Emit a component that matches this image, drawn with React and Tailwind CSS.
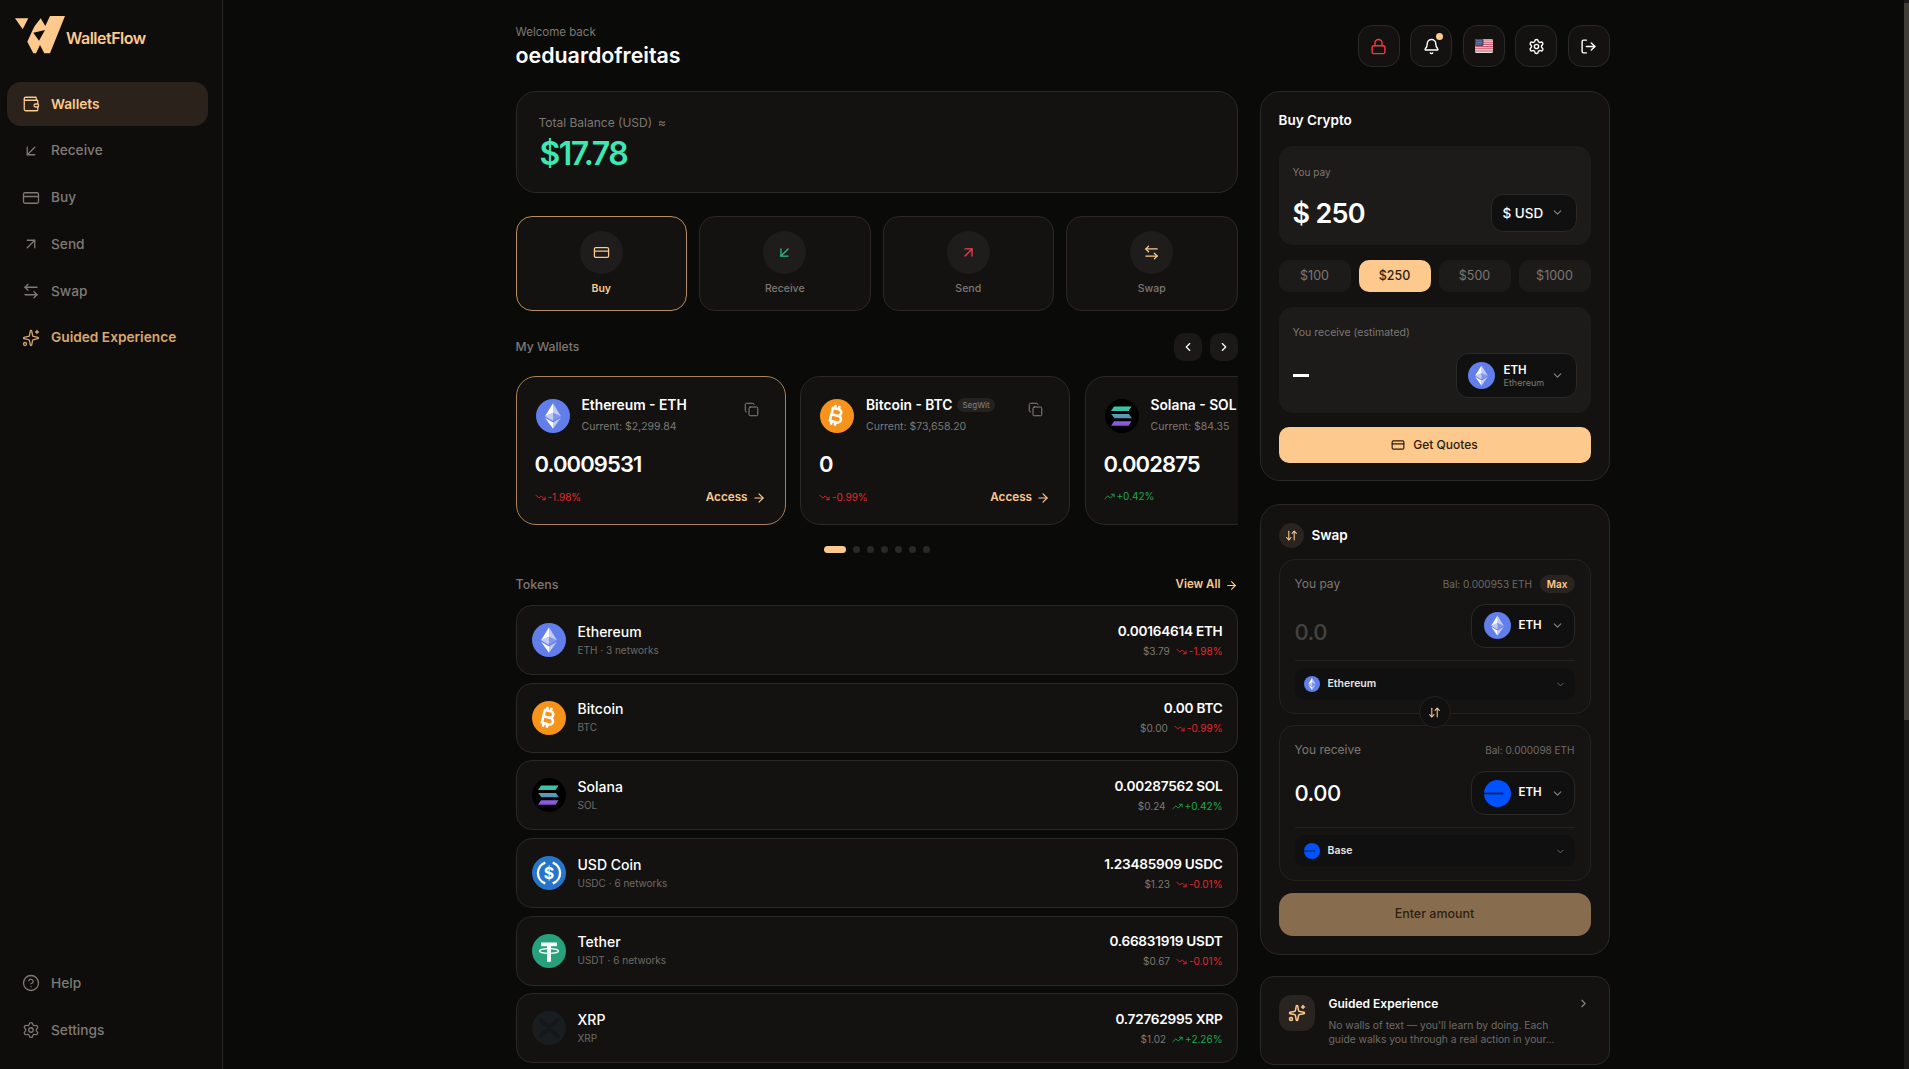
import {
  Wallet, ArrowDownLeft, CreditCard, ArrowUpRight, ArrowLeftRight, Sparkles, CircleHelp, Settings,
  Lock, Bell, LogOut, ChevronDown, ChevronLeft, ChevronRight, Copy, ArrowRight, TrendingDown, TrendingUp, ArrowDownUp,
} from 'lucide-react';
import { FaBitcoinSign } from 'react-icons/fa6';

// coin logos
function EthIcon({ size = 34 }) {
  return (
    <svg width={size} height={size} viewBox="0 0 32 32" className="shrink-0">
      <circle cx="16" cy="16" r="16" fill="#627EEA" />
      <path d="M16 4v8.900l7.500 3.300z" fill="#fff" fillOpacity=".6" />
      <path d="M16 4L8.500 16.200l7.500-3.300z" fill="#fff" />
      <path d="M16 22v6l7.500-10.400z" fill="#fff" fillOpacity=".6" />
      <path d="M16 28v-6l-7.500-4.400z" fill="#fff" />
      <path d="M16 20.600l7.500-4.400-7.500-3.300z" fill="#fff" fillOpacity=".2" />
      <path d="M8.500 16.200l7.500 4.400v-7.700z" fill="#fff" fillOpacity=".6" />
    </svg>
  );
}

function BtcIcon({ size = 34 }) {
  return (
    <div className="flex items-center justify-center rounded-full bg-[#f7931a] text-white shrink-0" style={{ width: size, height: size }}>
      <FaBitcoinSign className="rotate-[14deg]" size={size * 0.62} />
    </div>
  );
}

function SolIcon({ size = 34 }) {
  return (
    <svg width={size} height={size} viewBox="0 0 32 32" className="shrink-0">
      <defs>
        <linearGradient id="solgrad" x1="0" y1="0" x2="0" y2="1">
          <stop offset="0" stopColor="#2fd0a0" />
          <stop offset=".5" stopColor="#5a9bb5" />
          <stop offset="1" stopColor="#9a45e8" />
        </linearGradient>
      </defs>
      <circle cx="16" cy="16" r="16" fill="#000" />
      <path d="M8.500 7h16.500l-2.800 4.200H5.700z M6 14h16.500l2.800 4.200H8.800z M8.500 21h16.500l-2.800 4.200H5.700z" fill="url(#solgrad)" />
    </svg>
  );
}

function UsdcIcon({ size = 34 }) {
  return (
    <svg width={size} height={size} viewBox="0 0 32 32" className="shrink-0">
      <circle cx="16" cy="16" r="16" fill="#2775CA" />
      <path d="M12.500 6.200a10.400 10.400 0 0 0 0 19.600 M19.500 6.200a10.400 10.400 0 0 1 0 19.600" fill="none" stroke="#fff" strokeWidth="2.200" />
      <text x="16" y="21.500" textAnchor="middle" fontSize="15" fontWeight="700" fill="#fff" fontFamily="Inter, sans-serif">$</text>
    </svg>
  );
}

function UsdtIcon({ size = 34 }) {
  return (
    <svg width={size} height={size} viewBox="0 0 32 32" className="shrink-0">
      <circle cx="16" cy="16" r="16" fill="#26A17B" />
      <path d="M8.500 8h15v3.600h-5.600V26h-3.800V11.600H8.500z" fill="#fff" />
      <ellipse cx="16" cy="16" rx="9" ry="2.200" fill="none" stroke="#fff" strokeWidth="1.200" />
    </svg>
  );
}

function XrpIcon({ size = 34 }) {
  return (
    <svg width={size} height={size} viewBox="0 0 32 32" className="shrink-0">
      <circle cx="16" cy="16" r="16" fill="#1a1d20" />
      <path d="M7 7c3 4 5.500 7 9 7s6-3 9-7 M7 25c3-4 5.500-7 9-7s6 3 9 7" fill="none" stroke="#15181a" strokeWidth="3.500" />
    </svg>
  );
}

function BaseIcon({ size = 27 }) {
  return (
    <svg width={size} height={size} viewBox="0 0 32 32" className="shrink-0">
      <circle cx="16" cy="16" r="16" fill="#0052FF" />
      <rect x="0" y="15" width="23" height="2" fill="#0a1a44" />
    </svg>
  );
}

function UsFlag() {
  return (
    <svg width="18" height="14" viewBox="0 0 18 14">
      <rect width="18" height="14" rx="1.500" fill="#e9dfe0" />
      <path d="M0 1h18M0 3.200h18M0 5.400h18M0 7.600h18M0 9.800h18M0 12h18" stroke="#c9566b" strokeWidth="1.100" />
      <rect width="8.500" height="7" rx="1" fill="#3c4a7d" />
      <path d="M1.500 1.800h5.500M1.500 3.500h5.500M1.500 5.200h5.500" stroke="#c5cbe0" strokeWidth=".7" strokeDasharray="1 1" />
    </svg>
  );
}

function Logo() {
  return (
    <svg width="52" height="42" viewBox="14 15 52 42" className="shrink-0">
      <path d="M15 18.300h13.300l-5.600 11z" fill="#fdc98c" />
      <path
        fillRule="evenodd"
        fill="#fdc98c"
        d="M50 16h15L50 53.300h-5.700L40 45l-4 8.300h-2.700l-6-11.600 5-11 2.400-4.700 6-7.700 4.600 7.700z M33.300 32.700L45 30l-6 10.700z"
      />
    </svg>
  );
}

const navItems = [
  { label: 'Wallets', icon: Wallet, active: true },
  { label: 'Receive', icon: ArrowDownLeft },
  { label: 'Buy', icon: CreditCard },
  { label: 'Send', icon: ArrowUpRight },
  { label: 'Swap', icon: ArrowLeftRight },
];

const actions = [
  { label: 'Buy', icon: CreditCard, color: 'text-[#fdc98c]', active: true },
  { label: 'Receive', icon: ArrowDownLeft, color: 'text-[#2fbf84]' },
  { label: 'Send', icon: ArrowUpRight, color: 'text-[#ef4050]' },
  { label: 'Swap', icon: ArrowLeftRight, color: 'text-[#fdc98c]' },
];

const wallets = [
  { title: 'Ethereum - ETH', current: '$2,299.84', amount: '0.0009531', change: '-1.98%', up: false, logo: EthIcon, active: true },
  { title: 'Bitcoin - BTC', tag: 'SegWit', current: '$73,658.20', amount: '0', change: '-0.99%', up: false, logo: BtcIcon },
  { title: 'Solana - SOL', current: '$84.35', amount: '0.002875', change: '+0.42%', up: true, logo: SolIcon },
];

const tokens = [
  { name: 'Ethereum', sub: 'ETH · 3 networks', amount: '0.00164614 ETH', usd: '$3.79', change: '-1.98%', up: false, logo: EthIcon },
  { name: 'Bitcoin', sub: 'BTC', amount: '0.00 BTC', usd: '$0.00', change: '-0.99%', up: false, logo: BtcIcon },
  { name: 'Solana', sub: 'SOL', amount: '0.00287562 SOL', usd: '$0.24', change: '+0.42%', up: true, logo: SolIcon },
  { name: 'USD Coin', sub: 'USDC · 6 networks', amount: '1.23485909 USDC', usd: '$1.23', change: '-0.01%', up: false, logo: UsdcIcon },
  { name: 'Tether', sub: 'USDT · 6 networks', amount: '0.66831919 USDT', usd: '$0.67', change: '-0.01%', up: false, logo: UsdtIcon },
  { name: 'XRP', sub: 'XRP', amount: '0.72762995 XRP', usd: '$1.02', change: '+2.26%', up: true, logo: XrpIcon },
];

function Change({ value, up }) {
  const Icon = up ? TrendingUp : TrendingDown;
  return (
    <span className={`flex items-center gap-[2px] text-[10px] ${up ? 'text-[#1fa64f]' : 'text-[#e5262c]'}`}>
      <Icon size={11} />
      {value}
    </span>
  );
}

function HeaderButton({ children }) {
  return (
    <button className="relative w-[42px] h-[42px] rounded-[14px] border border-[#2a2928] bg-[#131211] flex items-center justify-center text-white">
      {children}
    </button>
  );
}

function WalletCard({ w }) {
  const Coin = w.logo;
  return (
    <div className={`w-[270px] h-[149px] shrink-0 rounded-[20px] border bg-[#131211] pt-[19px] pl-[18px] pr-[19px] ${w.active ? 'border-[#a98255]' : 'border-[#2a2928]'}`}>
      <div className="flex items-start">
        <div className="mt-[3px] ml-[1px]"><Coin size={34} /></div>
        <div className="ml-[12px] flex-1 whitespace-nowrap">
          <div className="flex items-center gap-[5px] h-[18px]">
            <span className="text-[13.800px] font-semibold text-white">{w.title}</span>
            {w.tag && <span className="rounded-full bg-[#232221] px-[5px] py-[1px] text-[8px] text-[#8a8580]">{w.tag}</span>}
          </div>
          <div className="mt-[5px] text-[10.500px] text-[#7d7872]">Current: {w.current}</div>
        </div>
        {!w.up && <Copy size={15} strokeWidth={1.6} className="mt-[6px] mr-[7px] text-[#8a8580]" />}
      </div>
      <div className="mt-[15px] text-[22px] leading-[28px] font-semibold tracking-[-0.9px] text-white">{w.amount}</div>
      <div className="mt-[11px] flex items-center justify-between">
        <Change value={w.change} up={w.up} />
        {!w.up && (
          <span className="flex items-center gap-[4px] text-[11.700px] font-semibold text-[#fdc98c]">
            Access <ArrowRight size={14} />
          </span>
        )}
      </div>
    </div>
  );
}

function TokenRow({ t }) {
  const Coin = t.logo;
  return (
    <div className="h-[70px] rounded-[16px] border border-[#2a2928] bg-[#131211] flex items-center justify-between pl-[15px] pr-[14px]">
      <div className="flex items-center gap-[12px]">
        <Coin size={34} />
        <div>
          <div className="text-[14px] leading-[18px] font-medium text-white">{t.name}</div>
          <div className="mt-[2px] text-[10px] leading-[15px] text-[#6f6b66]">{t.sub}</div>
        </div>
      </div>
      <div className="flex flex-col items-end">
        <div className="text-[13.600px] leading-[18px] font-semibold tracking-[-0.25px] text-white">{t.amount}</div>
        <div className="mt-[4px] flex items-center gap-[6px] text-[10px] text-[#7d7872]">
          {t.usd}
          <Change value={t.change} up={t.up} />
        </div>
      </div>
    </div>
  );
}

function SwapPanel({ label, bal, max, value, muted, coin, network, receive }) {
  return (
    <div className={`rounded-[16px] border border-[#232221] bg-[#151413] px-[15px] pt-[15px] ${receive ? 'h-[156px]' : 'h-[155px]'}`}>
      <div className="h-[18px] flex items-center justify-between">
        <span className="text-[12px] text-[#7d7872]">{label}</span>
        <div className="flex items-center gap-[8px]">
          <span className="text-[10px] text-[#6f6b66]">{bal}</span>
          {max && <span className="rounded-full bg-[#2a2420] px-[7px] h-[18px] leading-[18px] text-[10px] font-semibold text-[#fdc98c]">Max</span>}
        </div>
      </div>
      <div className={`flex items-center justify-between ${receive ? 'mt-[12px]' : 'mt-[9px]'}`}>
        <span className={`text-[22px] font-medium tracking-[-0.5px] ${muted ? 'pt-[14px] text-[#454340]' : 'text-white'}`}>{value}</span>
        <div className="w-[104px] h-[44px] rounded-[14px] border border-[#2a2928] bg-[#111010] flex items-center pl-[12px]">
          {coin}
          <span className="ml-[8px] text-[11.500px] font-semibold text-white">ETH</span>
          <ChevronDown size={13} className="ml-[9px] text-[#8a8580]" />
        </div>
      </div>
      <div className={`border-t border-[#232221] ${receive ? 'mt-[12px]' : 'mt-[11px]'}`} />
      <div className="mt-[7px] h-[32px] rounded-[10px] bg-[#111010] flex items-center justify-between pl-[9px] pr-[9px]">
        <div className="flex items-center gap-[8px]">
          {network.icon}
          <span className="text-[10.500px] font-semibold text-[#e6e4e1]">{network.name}</span>
        </div>
        <ChevronDown size={11} className="text-[#6f6b66]" />
      </div>
    </div>
  );
}

export default function App() {
  return (
    <div className="h-screen w-full flex overflow-hidden bg-[#0a0a09] text-white font-[family-name:Inter,sans-serif]">
      {/* sidebar */}
      <aside className="w-[223px] shrink-0 h-full bg-[#0e0d0c] border-r border-[#2a2928] flex flex-col justify-between">
        <div>
          <div className="h-[82px] pl-[14px] pt-[15px] flex items-start">
            <Logo />
            <span className="mt-[11px] text-[16px] font-semibold tracking-[-0.5px] text-[#fdc98c]">WalletFlow</span>
          </div>
          <nav className="px-[7px] w-[215px] flex flex-col gap-[2.750px]">
            {navItems.map(item => {
              const Icon = item.icon;
              return (
                <div key={item.label} className={`h-[44px] rounded-[14px] pl-[15px] flex items-center gap-[11px] text-[13.700px] ${item.active ? 'bg-[#2a221b] text-[#fdc98c] font-semibold' : 'text-[#7f7a74] font-medium'}`}>
                  <Icon size={18} strokeWidth={1.7} />
                  {item.label}
                </div>
              );
            })}
            <div className="h-[44px] pl-[15px] flex items-center gap-[11px] text-[13.700px] font-semibold text-[#d9a86c]">
              <Sparkles size={18} strokeWidth={1.7} />
              Guided Experience
            </div>
          </nav>
        </div>
        <div className="px-[7px] pb-[17px] flex flex-col gap-[3px]">
          <div className="h-[44px] pl-[15px] flex items-center gap-[11px] text-[13.700px] font-medium text-[#7f7a74]">
            <CircleHelp size={18} strokeWidth={1.7} /> Help
          </div>
          <div className="h-[44px] pl-[15px] flex items-center gap-[11px] text-[13.700px] font-medium text-[#7f7a74]">
            <Settings size={18} strokeWidth={1.7} /> Settings
          </div>
        </div>
      </aside>

      {/* main */}
      <main className="flex-1 h-full overflow-hidden pr-[2px]">
        <div className="w-[1094px] mx-auto pt-[25px]">
          <header className="h-[42px] flex items-center justify-between">
            <div>
              <div className="text-[11.500px] leading-[14px] text-[#7d7872]">Welcome back</div>
              <div className="mt-[3px] text-[21.400px] leading-[26px] font-semibold text-white">oeduardofreitas</div>
            </div>
            <div className="flex gap-[10.500px]">
              <HeaderButton><Lock size={17} className="text-[#ef3a3f]" /></HeaderButton>
              <HeaderButton>
                <Bell size={17} />
                <span className="absolute right-[8px] top-[7px] w-[7px] h-[7px] rounded-full bg-[#fdc98c]" />
              </HeaderButton>
              <HeaderButton><UsFlag /></HeaderButton>
              <HeaderButton><Settings size={17} /></HeaderButton>
              <HeaderButton><LogOut size={17} /></HeaderButton>
            </div>
          </header>

          <div className="mt-[24px] grid grid-cols-[722px_350px] gap-[22px] items-start">
            {/* left column */}
            <div>
              <div className="h-[102px] rounded-[20px] border border-[#2a2928] bg-[#131211] pl-[22px] pt-[22px]">
                <div className="flex items-center gap-[6px] text-[12px] leading-[18px] text-[#7d7872]">
                  Total Balance (USD) <span className="text-[12px]">≈</span>
                </div>
                <div className="mt-[2px] pl-[1px] text-[32px] leading-[40px] font-semibold tracking-[-1.500px] text-[#3ee8b5]">$17.78</div>
              </div>

              <div className="mt-[23px] grid grid-cols-4 gap-[12px]">
                {actions.map(a => {
                  const Icon = a.icon;
                  return (
                    <div key={a.label} className={`h-[95px] rounded-[16px] border bg-[#131211] flex flex-col items-center pt-[14px] ${a.active ? 'border-[#b88d5c]' : 'border-[#2a2928]'}`}>
                      <div className={`w-[43px] h-[43px] rounded-full bg-[#1e1d1c] flex items-center justify-center ${a.color}`}>
                        <Icon size={17} strokeWidth={1.8} />
                      </div>
                      <span className={`mt-[7px] text-[10.500px] ${a.active ? 'font-semibold text-[#fdc98c]' : 'font-medium text-[#7d7872]'}`}>{a.label}</span>
                    </div>
                  );
                })}
              </div>

              <div className="mt-[22px] h-[28px] flex items-center justify-between">
                <span className="pt-[1px] text-[12.200px] font-medium text-[#7d7872]">My Wallets</span>
                <div className="flex gap-[8px]">
                  <button className="w-[28px] h-[28px] rounded-[10px] bg-[#1a1918] flex items-center justify-center"><ChevronLeft size={14} /></button>
                  <button className="w-[28px] h-[28px] rounded-[10px] bg-[#1a1918] flex items-center justify-center"><ChevronRight size={14} /></button>
                </div>
              </div>

              <div className="mt-[15px] flex gap-[14.500px] overflow-hidden">
                {wallets.map(w => <WalletCard key={w.title} w={w} />)}
              </div>

              <div className="mt-[21px] flex items-center justify-center gap-[7px]">
                <span className="w-[22px] h-[7px] rounded-full bg-[#fdc98c]" />
                {[0, 1, 2, 3, 4, 5].map(i => <span key={i} className="w-[7px] h-[7px] rounded-full bg-[#2a2928]" />)}
              </div>

              <div className="mt-[22px] h-[20px] flex items-center justify-between">
                <span className="text-[12.500px] font-medium text-[#7d7872]">Tokens</span>
                <span className="flex items-center gap-[4px] text-[11.500px] font-semibold text-[#fdc98c]">View All <ArrowRight size={13} /></span>
              </div>

              <div className="mt-[10px] flex flex-col gap-[7.700px]">
                {tokens.map(t => <TokenRow key={t.name} t={t} />)}
              </div>
            </div>

            {/* right column */}
            <div>
              <section className="h-[390px] rounded-[20px] border border-[#2a2928] bg-[#131211] p-[18px]">
                <h2 className="text-[13.500px] leading-[20px] font-semibold text-white">Buy Crypto</h2>
                <div className="mt-[16px] h-[99px] rounded-[14px] bg-[#1c1b1a] px-[14px] pt-[19px]">
                  <div className="text-[10px] leading-[14px] text-[#7d7872]">You pay</div>
                  <div className="mt-[12px] flex items-center justify-between">
                    <span className="pt-[3px] text-[27px] font-semibold tracking-[-0.7px] text-white">$ 250</span>
                    <div className="w-[86px] h-[38px] rounded-[12px] border border-[#2a2928] bg-[#111010] flex items-center pl-[11px] text-[13.500px] font-medium text-white">
                      $ USD
                      <ChevronDown size={13} className="ml-[8px] text-[#8a8580]" />
                    </div>
                  </div>
                </div>

                <div className="mt-[15px] grid grid-cols-4 gap-[8px]">
                  {['$100', '$250', '$500', '$1000'].map(p => (
                    <div key={p} className={`h-[32px] rounded-[10px] flex items-center justify-center text-[12.500px] ${p === '$250' ? 'bg-[#fdc98c] text-[#2e1f10] font-medium' : 'bg-[#1c1b1a] text-[#7d7872]'}`}>{p}</div>
                  ))}
                </div>

                <div className="mt-[15px] h-[106px] rounded-[14px] bg-[#1c1b1a] px-[14px] pt-[19px]">
                  <div className="text-[10.500px] leading-[14px] text-[#7d7872]">You receive (estimated)</div>
                  <div className="mt-[13px] flex items-center justify-between">
                    <span className="w-[16px] h-[3px] bg-white" />
                    <div className="w-[121px] h-[45px] rounded-[12px] border border-[#2a2928] bg-[#111010] flex items-center pl-[11px]">
                      <EthIcon size={27} />
                      <div className="ml-[9px]">
                        <div className="text-[11.500px] leading-[14px] font-semibold text-white">ETH</div>
                        <div className="text-[9px] leading-[12px] text-[#7d7872]">Ethereum</div>
                      </div>
                      <ChevronDown size={13} className="ml-[7px] text-[#8a8580]" />
                    </div>
                  </div>
                </div>

                <button className="mt-[14px] w-full h-[36px] rounded-[10px] bg-[#fdc98c] flex items-center justify-center gap-[8px] text-[12px] font-medium text-[#2a1c0e]">
                  <CreditCard size={14} /> Get Quotes
                </button>
              </section>

              <section className="mt-[23px] h-[451px] rounded-[20px] border border-[#2a2928] bg-[#131211] p-[18px]">
                <div className="flex items-center gap-[8px] h-[25px]">
                  <div className="w-[25px] h-[25px] rounded-full bg-[#2a2420] flex items-center justify-center text-[#fdc98c]">
                    <ArrowDownUp size={13} />
                  </div>
                  <h2 className="text-[13.500px] font-semibold text-white">Swap</h2>
                </div>

                <div className="relative mt-[11px] flex flex-col gap-[11px]">
                  <SwapPanel
                    label="You pay"
                    bal="Bal: 0.000953 ETH"
                    max
                    value="0.0"
                    muted
                    coin={<EthIcon size={27} />}
                    network={{ name: 'Ethereum', icon: <EthIcon size={16} /> }}
                  />
                  <div className="absolute left-[140px] top-[137px] w-[32px] h-[32px] rounded-full border border-[#232221] bg-[#111010] flex items-center justify-center text-[#fdc98c]">
                    <ArrowDownUp size={13} />
                  </div>
                  <SwapPanel
                    label="You receive"
                    bal="Bal: 0.000098 ETH"
                    value="0.00"
                    receive
                    coin={<BaseIcon size={27} />}
                    network={{ name: 'Base', icon: <BaseIcon size={16} /> }}
                  />
                </div>

                <button className="mt-[12px] w-full h-[43px] rounded-[14px] bg-[#876d4e] text-[12.500px] font-medium text-[#2e1f10]">Enter amount</button>
              </section>

              <section className="mt-[21px] h-[89px] rounded-[14px] border border-[#2a2928] bg-[#131211] pl-[18px] pr-[19px] pt-[18px] flex items-start">
                <div className="w-[36px] h-[36px] shrink-0 rounded-[12px] bg-[#2a2420] flex items-center justify-center text-[#fdc98c]">
                  <Sparkles size={18} />
                </div>
                <div className="ml-[14px] flex-1">
                  <div className="text-[12px] leading-[18px] font-semibold text-white">Guided Experience</div>
                  <div className="mt-[5px] w-[232px] text-[10.300px] leading-[14px] text-[#6f6b66]">No walls of text — you'll learn by doing. Each guide walks you through a real action in your...</div>
                </div>
                <ChevronRight size={13} className="mt-[2px] text-[#8a8580]" />
              </section>
            </div>
          </div>
        </div>
      </main>

      {/* page scrollbar */}
      <div className="w-[5px] shrink-0 h-full bg-[#1a1917] pt-[3px]">
        <div className="h-[717px] bg-[#403c36]" />
      </div>
    </div>
  );
}
